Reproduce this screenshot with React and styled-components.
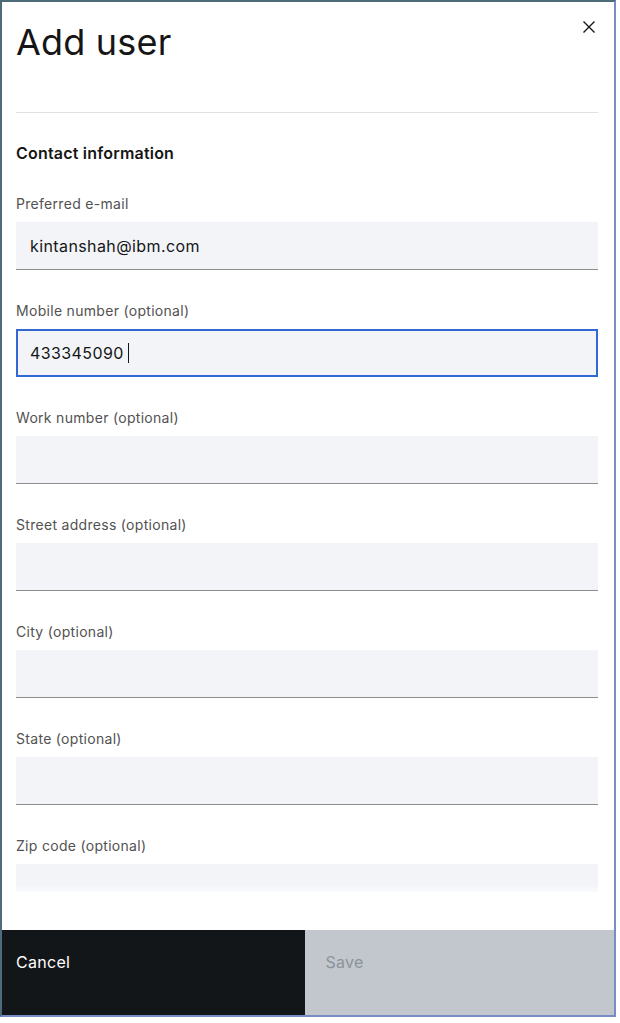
import React from 'react';
import styled, { createGlobalStyle } from 'styled-components';

const GlobalStyle = createGlobalStyle`
  html, body {
    margin: 0;
    padding: 0;
    background: #ffffff;
  }
  body {
    font-family: "Inter", "Noto Sans", sans-serif;
    color: #161616;
  }
  * { box-sizing: border-box; }
`;

const Frame = styled.div`
  width: 616px;
  height: 1017px;
  display: flex;
  flex-direction: column;
  border-style: solid;
  border-width: 2px;
  border-color: #4e6b7a #7a8cc5 #7a8cc5 #4e6b7a;
  background: #ffffff;
`;

const Header = styled.header`
  display: flex;
  justify-content: space-between;
  align-items: flex-start;
  padding: 18px 16px 0 14px;
`;

const Title = styled.h1`
  margin: 0;
  font-size: 36px;
  line-height: 44px;
  font-weight: 400;
  letter-spacing: 0.2px;
  color: #161616;
`;

const CloseButton = styled.button`
  border: 0;
  background: none;
  padding: 0;
  margin: 0;
  width: 16px;
  height: 16px;
  display: flex;
  align-items: center;
  justify-content: center;
  cursor: pointer;
  color: #161616;
  transform: translate(-1px, -1px);
`;

const Body = styled.div`
  flex: 1;
  display: flex;
  flex-direction: column;
  min-height: 0;
  padding: 0 16px 38px 14px;
`;

const Scroller = styled.div`
  flex: 1;
  min-height: 0;
  overflow: hidden;
  position: relative;
`;

const Divider = styled.hr`
  margin: 48px 0 0;
  border: 0;
  border-top: 1px solid #e0e0e0;
`;

const SectionTitle = styled.h2`
  margin: 30px 0 32px;
  font-size: 16px;
  line-height: 20px;
  font-weight: 600;
  letter-spacing: 0.2px;
  color: #161616;
`;

const Field = styled.div`
  display: flex;
  flex-direction: column;
  margin-bottom: 32px;
`;

const Label = styled.label`
  font-size: 14px;
  line-height: 18px;
  color: #525252;
  letter-spacing: 0.3px;
  margin-bottom: 9px;
`;

const InputBox = styled.div`
  height: 48px;
  display: flex;
  align-items: center;
  padding: 0 14px;
  background: #f2f4f8;
  font-size: 16px;
  letter-spacing: 0.4px;
  color: #161616;
  border-bottom: 1px solid #8d8d8d;
  outline: ${p => (p.$focused ? '2px solid #3268d6' : 'none')};
  outline-offset: -2px;
`;

const Caret = styled.span`
  display: inline-block;
  width: 1px;
  height: 20px;
  margin-left: 4px;
  background: #161616;
`;

const Fade = styled.div`
  position: absolute;
  left: 0;
  right: 0;
  bottom: 0;
  height: 8px;
  background: linear-gradient(rgba(255, 255, 255, 0), rgba(255, 255, 255, 0.6));
  pointer-events: none;
`;

const Footer = styled.footer`
  height: 85px;
  display: flex;
`;

const FooterButton = styled.button`
  flex: 1;
  border: 0;
  margin: 0;
  padding: 22px 14px 0;
  text-align: left;
  display: flex;
  align-items: flex-start;
  font-family: inherit;
  font-size: 16px;
  line-height: 20px;
  letter-spacing: 0.3px;
  background: ${p => (p.$disabled ? '#c1c7cd' : '#121619')};
  color: ${p => (p.$disabled ? '#8d939a' : '#ffffff')};
  cursor: ${p => (p.$disabled ? 'not-allowed' : 'pointer')};
  padding-left: ${p => (p.$disabled ? '21px' : '14px')};
`;

const fields = [
  { label: 'Preferred e-mail', value: 'kintanshah@ibm.com' },
  { label: 'Mobile number (optional)', value: '433345090', focused: true },
  { label: 'Work number (optional)', value: '' },
  { label: 'Street address (optional)', value: '' },
  { label: 'City (optional)', value: '' },
  { label: 'State (optional)', value: '' },
  { label: 'Zip code (optional)', value: '' },
];

function CloseIcon() {
  return (
    <svg width="14" height="14" viewBox="0 0 14 14" fill="none">
      <path d="M1.5 1.5 L12.5 12.5 M12.5 1.5 L1.5 12.5" stroke="currentColor" strokeWidth="1.4" />
    </svg>
  );
}

export default function App() {
  return (
    <>
      <GlobalStyle />
      <Frame>
        <Header>
          <Title>Add user</Title>
          <CloseButton aria-label="Close">
            <CloseIcon />
          </CloseButton>
        </Header>
        <Body>
          <Scroller>
            <Divider />
            <SectionTitle>Contact information</SectionTitle>
            {fields.map(f => (
              <Field key={f.label}>
                <Label>{f.label}</Label>
                <InputBox $focused={f.focused}>
                  {f.value}
                  {f.focused && <Caret />}
                </InputBox>
              </Field>
            ))}
            <Fade />
          </Scroller>
        </Body>
        <Footer>
          <FooterButton>Cancel</FooterButton>
          <FooterButton $disabled>Save</FooterButton>
        </Footer>
      </Frame>
    </>
  );
}
